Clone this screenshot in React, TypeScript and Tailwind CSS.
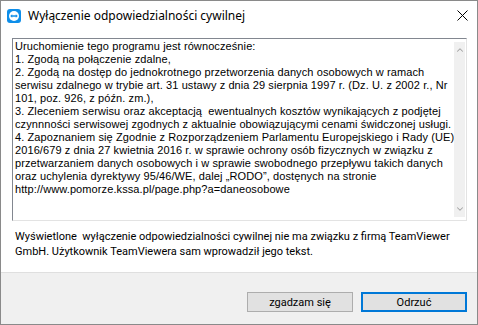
import { ChevronUp, ChevronDown } from "lucide-react";

const lines = [
  "Uruchomienie tego programu jest równocześnie:",
  "1. Zgodą na połączenie zdalne,",
  "2. Zgodą na dostęp do jednokrotnego przetworzenia danych osobowych w ramach",
  "serwisu zdalnego w trybie art. 31 ustawy z dnia 29 sierpnia 1997 r. (Dz. U. z 2002 r., Nr",
  "101, poz. 926, z późn. zm.),",
  "3. Zleceniem serwisu oraz akceptacją  ewentualnych kosztów wynikających z podjętej",
  "czynnności serwisowej zgodnych z aktualnie obowiązującymi cenami świdczonej usługi.",
  "4. Zapoznaniem się Zgodnie z Rozporządzeniem Parlamentu Europejskiego i Rady (UE)",
  "2016/679 z dnia 27 kwietnia 2016 r. w sprawie ochrony osób fizycznych w związku z",
  "przetwarzaniem danych osobowych i w sprawie swobodnego przepływu takich danych",
  "oraz uchylenia dyrektywy 95/46/WE, dalej „RODO”, dostęnych na stronie",
  "http://www.pomorze.kssa.pl/page.php?a=daneosobowe",
];

function TvIcon() {
  return (
    <svg width="14" height="14" viewBox="0 0 14 14">
      <rect x="0" y="0" width="14" height="14" rx="3" fill="#0e8ee9" />
      <circle cx="7" cy="7" r="5" fill="#fff" />
      <path d="M3.2 7 L5.2 5.2 V6.3 H8.8 V5.2 L10.8 7 L8.8 8.8 V7.7 H5.2 V8.8 Z" fill="#0e8ee9" />
    </svg>
  );
}

export default function App() {
  return (
    <div className="w-[478px] h-[325px] border border-[#8a8a8a] bg-white flex flex-col font-['Noto_Sans',sans-serif] text-black overflow-hidden">
      {/* title bar */}
      <div className="h-[29px] flex items-center shrink-0">
        <div className="ml-[6px] mr-[7px]">
          <TvIcon />
        </div>
        <span className="text-[12px] leading-none">Wyłączenie odpowiedzialności cywilnej</span>
        <div className="ml-auto mr-[9px] w-[12px] h-[12px] flex items-center justify-center">
          <svg width="11" height="11" viewBox="0 0 11 11">
            <path d="M0.5 0.5 L10.5 10.5 M10.5 0.5 L0.5 10.5" stroke="#000" strokeWidth="1" />
          </svg>
        </div>
      </div>

      {/* body */}
      <div className="flex-1 flex flex-col px-[11px] pt-[8px]">
        <div className="h-[183px] w-[455px] border border-t-[#828790] border-l-[#828790] border-r-[#e3e3e3] border-b-[#e3e3e3] flex">
          <div className="flex-1 pl-[2px] pt-[1px] font-['Liberation_Sans',sans-serif] text-[11px] leading-[13px] tracking-[0.1px] whitespace-pre">
            {lines.map((l, i) => (
              <div key={i}>{l}</div>
            ))}
          </div>
          <div className="w-[15px] bg-[#f0f0f0] flex flex-col items-center justify-between py-[3px] my-[3px] mr-[1px]">
            <ChevronUp className="w-[10px] h-[10px] text-[#a3a3a3]" strokeWidth={2.5} />
            <ChevronDown className="w-[10px] h-[10px] text-[#a3a3a3]" strokeWidth={2.5} />
          </div>
        </div>
        <div className="mt-[8px] pl-[3px] font-['Roboto',sans-serif] text-[11px] leading-[15px] whitespace-nowrap">
          <div>Wyświetlone&nbsp; wyłączenie odpowiedzialności cywilnej nie ma związku z firmą TeamViewer</div>
          <div>GmbH. Użytkownik TeamViewera sam wprowadził jego tekst.</div>
        </div>
      </div>

      {/* footer */}
      <div className="h-[52px] shrink-0 bg-[#f0f0f0] border-t border-[#dfdfdf] flex items-start justify-end gap-[8px] pr-[10px] pt-[19px]">
        <button className="w-[106px] h-[20px] bg-[#e1e1e1] border border-[#adadad] font-['Roboto',sans-serif] text-[11px] leading-none">
          zgadzam się
        </button>
        <button className="w-[106px] h-[20px] bg-[#e1e1e1] border-2 border-[#0078d7] font-['Roboto',sans-serif] text-[11px] leading-none">
          Odrzuć
        </button>
      </div>
    </div>
  );
}
